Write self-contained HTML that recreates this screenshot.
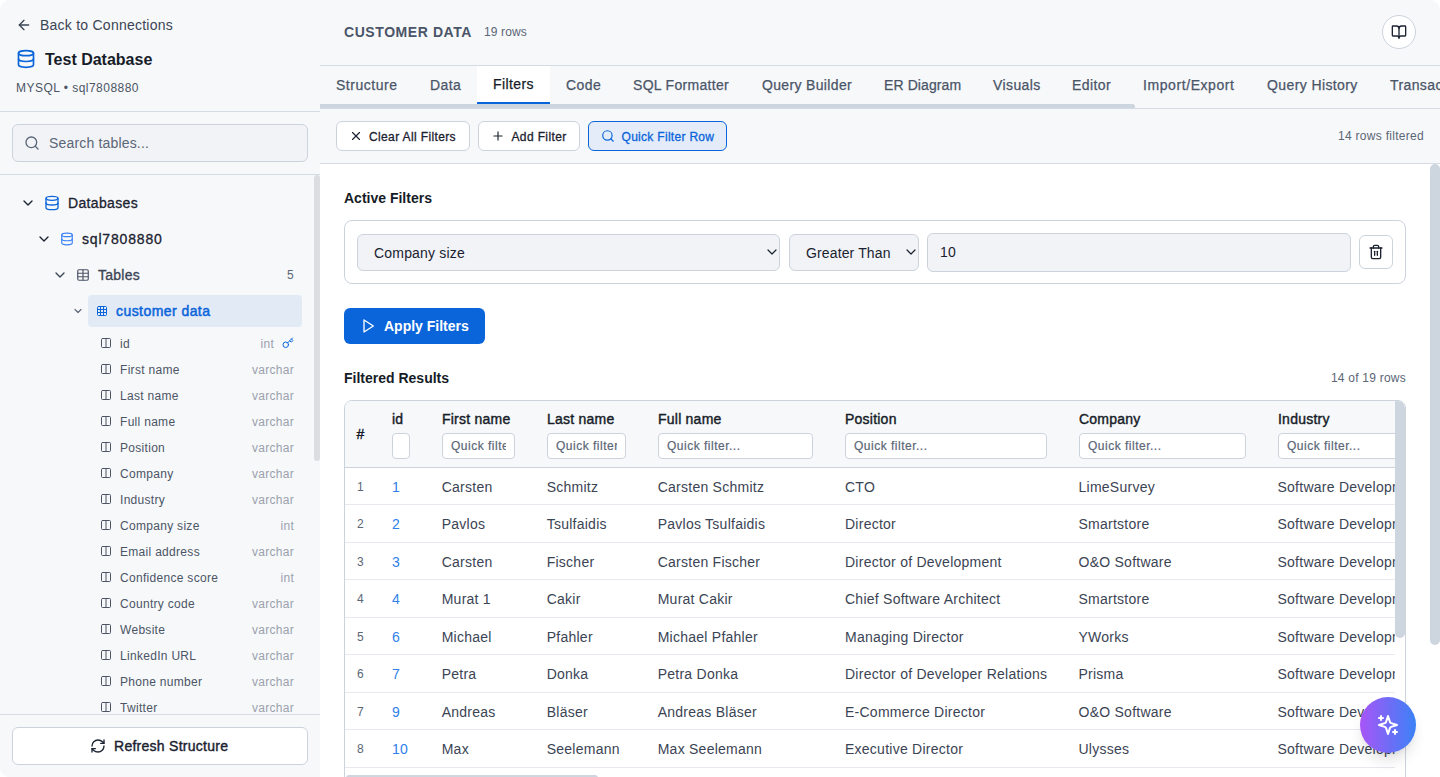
<!DOCTYPE html>
<html lang="en">
<head>
<meta charset="utf-8">
<title>Test Database - Filters</title>
<style>
*{box-sizing:border-box;margin:0;padding:0}
html,body{width:1440px;height:777px;overflow:hidden;background:#fff}
body{font-family:"Liberation Sans",sans-serif;color:#1b2230;font-size:14px;position:relative}
.app{position:absolute;left:0;top:0;width:1440px;height:777px;background:#f7f8fa;border-radius:10px;overflow:hidden}
.abs{position:absolute}
.t{position:absolute;white-space:nowrap;line-height:20px}
.med{-webkit-text-stroke:0.3px currentColor}
svg{position:absolute;overflow:visible}
.ic{fill:none;stroke:currentColor;stroke-width:2;stroke-linecap:round;stroke-linejoin:round}
/* sidebar */
.side{position:absolute;left:0;top:0;width:320px;height:777px;background:#f7f8fa}
.hl{position:absolute;height:1px;background:#d5dbe4}
.search{position:absolute;left:12px;top:124px;width:296px;height:38px;border:1px solid #ccd3dd;border-radius:6px;background:#f1f3f7}
.col{position:absolute;left:0;width:320px;height:26px}
.col .n{position:absolute;left:120px;top:4px;font-size:12px;line-height:20px;color:#4b5565;letter-spacing:.3px;white-space:nowrap}
.col .ty{position:absolute;right:26px;top:4px;font-size:12px;line-height:20px;color:#9aa1ad;letter-spacing:.28px;white-space:nowrap}
.col svg{left:100px;top:7px;width:12px;height:12px;color:#4b5565}
.col svg.key{left:282px;top:7px;width:12px;height:12px;color:#0b65da}
.btn{position:absolute;background:#fff;border:1px solid #ccd3dd;border-radius:6px}
/* main */
.main{position:absolute;left:320px;top:0;width:1120px;height:777px}
.tab{position:absolute;top:75px;font-size:14px;line-height:20px;color:#4a5568;white-space:nowrap;-webkit-text-stroke:0.25px currentColor}
.content{position:absolute;left:0;top:164px;width:1120px;height:613px;background:#fff}
.sel{position:absolute;top:234px;height:37px;border:1px solid #ccd3dd;border-radius:6px;background:#f1f3f7}
.tbl{position:absolute;left:24px;top:400px;width:1062px;height:400px;border:1px solid #ccd3dd;border-radius:8px;background:#fff;overflow:hidden}
.thead{position:absolute;left:0;top:0;width:1062px;height:67px;background:#f7f8fa;border-bottom:1px solid #ccd3dd}
.th{position:absolute;top:8px;font-size:14px;line-height:20px;color:#161c28;white-space:nowrap;letter-spacing:.23px;-webkit-text-stroke:.4px currentColor}
.qf{position:absolute;top:32px;height:26px;border:1px solid #ccd3dd;border-radius:4px;background:#fff;padding:0 8px}
.qf div{font-size:12px;line-height:25px;color:#5b6676;overflow:hidden;white-space:nowrap;letter-spacing:.5px;-webkit-text-stroke:0.2px currentColor}
.row{position:absolute;left:0;width:1062px;border-bottom:1px solid #e6e9ee}
.row span{position:absolute;top:var(--t);line-height:20px;font-size:14px;color:#3b4454;white-space:nowrap;letter-spacing:.25px}
.row .rn{left:12px;font-size:12px;color:#5b6676;letter-spacing:0}
.row .id{left:47px;color:#2f80e8}
.c1{left:96.7px}.c2{left:201.7px}.c3{left:312.7px}.c4{left:500px}.c5{left:733.5px}.c6{left:932.5px}
</style>
</head>
<body>
<div class="app">
<!-- SIDEBAR -->
<div class="side">
  <svg class="ic" viewBox="0 0 24 24" style="left:16px;top:17px;width:16px;height:16px;color:#3b4454"><path d="m12 19-7-7 7-7"/><path d="M19 12H5"/></svg>
  <div class="t" style="left:40px;top:15px;font-size:14px;color:#3b4454;letter-spacing:.24px">Back to Connections</div>
  <svg class="ic" viewBox="0 0 24 24" style="left:16px;top:49px;width:20px;height:20px;color:#0b65da"><ellipse cx="12" cy="5" rx="9" ry="3"/><path d="M3 5V19A9 3 0 0 0 21 19V5"/><path d="M3 12A9 3 0 0 0 21 12"/></svg>
  <div class="t" style="left:45px;top:50px;font-size:16px;font-weight:700;color:#161c28">Test Database</div>
  <div class="t" style="left:16px;top:78px;font-size:12px;color:#4b5565;letter-spacing:.47px">MYSQL • sql7808880</div>
  <div class="hl" style="left:0;top:111px;width:320px"></div>
  <div class="search">
    <svg class="ic" viewBox="0 0 24 24" style="left:11px;top:10px;width:16px;height:16px;color:#5b6676"><circle cx="11" cy="11" r="8"/><path d="m21 21-4.3-4.3"/></svg>
    <div class="t" style="left:36px;top:8px;font-size:14px;color:#5b6676;letter-spacing:.17px">Search tables...</div>
  </div>
  <div class="hl" style="left:0;top:174px;width:320px"></div>
  <div class="abs" style="left:314px;top:175px;width:5.5px;height:286px;border-radius:3px;background:#dcdde0"></div>

  <!-- tree -->
  <svg class="ic" viewBox="0 0 24 24" style="left:20px;top:195px;width:16px;height:16px;color:#1b2230"><path d="m6 9 6 6 6-6"/></svg>
  <svg class="ic" viewBox="0 0 24 24" style="left:44px;top:195px;width:16px;height:16px;color:#0b65da"><ellipse cx="12" cy="5" rx="9" ry="3"/><path d="M3 5V19A9 3 0 0 0 21 19V5"/><path d="M3 12A9 3 0 0 0 21 12"/></svg>
  <div class="t med" style="left:68px;top:193px;font-size:14px;color:#1b2230;letter-spacing:.34px">Databases</div>

  <svg class="ic" viewBox="0 0 24 24" style="left:36px;top:231px;width:16px;height:16px;color:#1b2230"><path d="m6 9 6 6 6-6"/></svg>
  <svg class="ic" viewBox="0 0 24 24" style="left:60px;top:232px;width:14px;height:14px;color:#3b82f6"><ellipse cx="12" cy="5" rx="9" ry="3"/><path d="M3 5V19A9 3 0 0 0 21 19V5"/><path d="M3 12A9 3 0 0 0 21 12"/></svg>
  <div class="t med" style="left:82px;top:229px;font-size:14px;color:#1b2230;letter-spacing:.82px">sql7808880</div>

  <svg class="ic" viewBox="0 0 24 24" style="left:52px;top:267px;width:16px;height:16px;color:#3b4454"><path d="m6 9 6 6 6-6"/></svg>
  <svg class="ic" viewBox="0 0 24 24" style="left:76px;top:268px;width:14px;height:14px;color:#4b5565"><rect x="3" y="3" width="18" height="18" rx="2"/><path d="M12 3v18M3 9h18M3 15h18"/></svg>
  <div class="t med" style="left:98px;top:265px;font-size:14px;color:#3b4454;letter-spacing:.26px">Tables</div>
  <div class="t" style="left:287px;top:265px;font-size:12px;color:#5b6676">5</div>

  <div class="abs" style="left:88px;top:295px;width:214px;height:32px;border-radius:4px;background:#e2eaf6"></div>
  <svg class="ic" viewBox="0 0 24 24" style="left:72px;top:305px;width:12px;height:12px;color:#5f6a7a;stroke-width:2.4"><path d="m6 9 6 6 6-6"/></svg>
  <svg class="ic" viewBox="0 0 24 24" style="left:96px;top:305px;width:12px;height:12px;color:#0b65da"><rect x="3" y="3" width="18" height="18" rx="2"/><path d="M3 9h18M3 15h18M9 3v18M15 3v18"/></svg>
  <div class="t" style="left:116px;top:301px;font-size:14px;color:#0b65da;letter-spacing:.44px;-webkit-text-stroke:.5px currentColor">customer data</div>

    <div class="col" style="top:330px"><svg class="ic" viewBox="0 0 24 24"><rect x="3" y="3" width="18" height="18" rx="2"/><path d="M12 3v18"/></svg><span class="n">id</span><span class="ty" style="right:46px">int</span><svg class="ic key" viewBox="0 0 24 24"><path d="m15.5 7.5 2.3 2.3a1 1 0 0 0 1.4 0l2.1-2.1a1 1 0 0 0 0-1.4L19 4"/><path d="m21 2-9.6 9.6"/><circle cx="7.5" cy="15.5" r="5.5"/></svg></div>
  <div class="col" style="top:356px"><svg class="ic" viewBox="0 0 24 24"><rect x="3" y="3" width="18" height="18" rx="2"/><path d="M12 3v18"/></svg><span class="n">First name</span><span class="ty" style="right:26px">varchar</span></div>
  <div class="col" style="top:382px"><svg class="ic" viewBox="0 0 24 24"><rect x="3" y="3" width="18" height="18" rx="2"/><path d="M12 3v18"/></svg><span class="n">Last name</span><span class="ty" style="right:26px">varchar</span></div>
  <div class="col" style="top:408px"><svg class="ic" viewBox="0 0 24 24"><rect x="3" y="3" width="18" height="18" rx="2"/><path d="M12 3v18"/></svg><span class="n">Full name</span><span class="ty" style="right:26px">varchar</span></div>
  <div class="col" style="top:434px"><svg class="ic" viewBox="0 0 24 24"><rect x="3" y="3" width="18" height="18" rx="2"/><path d="M12 3v18"/></svg><span class="n">Position</span><span class="ty" style="right:26px">varchar</span></div>
  <div class="col" style="top:460px"><svg class="ic" viewBox="0 0 24 24"><rect x="3" y="3" width="18" height="18" rx="2"/><path d="M12 3v18"/></svg><span class="n">Company</span><span class="ty" style="right:26px">varchar</span></div>
  <div class="col" style="top:486px"><svg class="ic" viewBox="0 0 24 24"><rect x="3" y="3" width="18" height="18" rx="2"/><path d="M12 3v18"/></svg><span class="n">Industry</span><span class="ty" style="right:26px">varchar</span></div>
  <div class="col" style="top:512px"><svg class="ic" viewBox="0 0 24 24"><rect x="3" y="3" width="18" height="18" rx="2"/><path d="M12 3v18"/></svg><span class="n">Company size</span><span class="ty" style="right:26px">int</span></div>
  <div class="col" style="top:538px"><svg class="ic" viewBox="0 0 24 24"><rect x="3" y="3" width="18" height="18" rx="2"/><path d="M12 3v18"/></svg><span class="n">Email address</span><span class="ty" style="right:26px">varchar</span></div>
  <div class="col" style="top:564px"><svg class="ic" viewBox="0 0 24 24"><rect x="3" y="3" width="18" height="18" rx="2"/><path d="M12 3v18"/></svg><span class="n">Confidence score</span><span class="ty" style="right:26px">int</span></div>
  <div class="col" style="top:590px"><svg class="ic" viewBox="0 0 24 24"><rect x="3" y="3" width="18" height="18" rx="2"/><path d="M12 3v18"/></svg><span class="n">Country code</span><span class="ty" style="right:26px">varchar</span></div>
  <div class="col" style="top:616px"><svg class="ic" viewBox="0 0 24 24"><rect x="3" y="3" width="18" height="18" rx="2"/><path d="M12 3v18"/></svg><span class="n">Website</span><span class="ty" style="right:26px">varchar</span></div>
  <div class="col" style="top:642px"><svg class="ic" viewBox="0 0 24 24"><rect x="3" y="3" width="18" height="18" rx="2"/><path d="M12 3v18"/></svg><span class="n">LinkedIn URL</span><span class="ty" style="right:26px">varchar</span></div>
  <div class="col" style="top:668px"><svg class="ic" viewBox="0 0 24 24"><rect x="3" y="3" width="18" height="18" rx="2"/><path d="M12 3v18"/></svg><span class="n">Phone number</span><span class="ty" style="right:26px">varchar</span></div>
  <div class="col" style="top:694px"><svg class="ic" viewBox="0 0 24 24"><rect x="3" y="3" width="18" height="18" rx="2"/><path d="M12 3v18"/></svg><span class="n">Twitter</span><span class="ty" style="right:26px">varchar</span></div>

  <div class="hl" style="left:0;top:714px;width:320px"></div>
  <div class="abs" style="left:0;top:715px;width:320px;height:62px;background:#f7f8fa"></div>
  <div class="btn" style="left:12px;top:727px;width:296px;height:38px">
    <svg class="ic" viewBox="0 0 24 24" style="left:77px;top:10px;width:16px;height:16px;color:#1b2230"><path d="M3 12a9 9 0 0 1 9-9 9.75 9.75 0 0 1 6.74 2.74L21 8"/><path d="M21 3v5h-5"/><path d="M21 12a9 9 0 0 1-9 9 9.75 9.75 0 0 1-6.74-2.74L3 16"/><path d="M8 16H3v5"/></svg>
    <div class="t" style="left:101px;top:8px;font-size:14px;color:#1b2230;letter-spacing:.27px;-webkit-text-stroke:.4px currentColor">Refresh Structure</div>
  </div>
</div>

<!-- MAIN -->
<div class="main" id="main">
  <!-- header -->
  <div class="t" style="left:24px;top:22px;font-size:14px;font-weight:700;color:#4a5568;letter-spacing:.57px">CUSTOMER DATA</div>
  <div class="t" style="left:164px;top:22px;font-size:12px;color:#5b6676;letter-spacing:.14px">19 rows</div>
  <div class="abs" style="left:1062px;top:15px;width:34px;height:34px;border-radius:17px;background:#fff;border:1px solid #ccd3dd"></div>
  <svg class="ic" viewBox="0 0 24 24" style="left:1071px;top:24px;width:16px;height:16px;color:#1b2230"><path d="M12 7v14"/><path d="M3 18a1 1 0 0 1-1-1V4a1 1 0 0 1 1-1h5a4 4 0 0 1 4 4 4 4 0 0 1 4-4h5a1 1 0 0 1 1 1v13a1 1 0 0 1-1 1h-6a3 3 0 0 0-3 3 3 3 0 0 0-3-3z"/></svg>
  <div class="hl" style="left:0;top:65px;width:1120px"></div>
  <!-- tabs -->
  <div class="abs" style="left:157px;top:66px;width:73px;height:38px;background:#fff;border-bottom:2px solid #0b65da"></div>
  <div class="tab" style="left:16px;letter-spacing:.52px">Structure</div>
  <div class="tab" style="left:110px;letter-spacing:.4px">Data</div>
  <div class="tab" style="left:173px;top:74px;color:#161c28;letter-spacing:.4px">Filters</div>
  <div class="tab" style="left:246px;letter-spacing:.4px">Code</div>
  <div class="tab" style="left:313px;letter-spacing:.3px">SQL Formatter</div>
  <div class="tab" style="left:442px;letter-spacing:.34px">Query Builder</div>
  <div class="tab" style="left:564px;letter-spacing:.1px">ER Diagram</div>
  <div class="tab" style="left:673px;letter-spacing:.4px">Visuals</div>
  <div class="tab" style="left:752px;letter-spacing:.4px">Editor</div>
  <div class="tab" style="left:823px;letter-spacing:.58px">Import/Export</div>
  <div class="tab" style="left:947px;letter-spacing:.4px">Query History</div>
  <div class="tab" style="left:1070px;letter-spacing:.4px">Transactions</div>
  <div class="abs" style="left:0;top:104px;width:815px;height:4.5px;background:#cdd5df;border-radius:0 3px 3px 0"></div>
  <div class="hl" style="left:0;top:108px;width:1120px"></div>
  <!-- toolbar -->
  <div class="btn" style="left:16px;top:121px;width:134px;height:30px">
    <svg class="ic" viewBox="0 0 24 24" style="left:12px;top:7px;width:14px;height:14px;color:#1b2230;stroke-width:2"><path d="M18 6 6 18"/><path d="m6 6 12 12"/></svg>
    <div class="t med" style="left:32px;top:4.5px;font-size:12px;color:#1b2230;letter-spacing:.37px">Clear All Filters</div>
  </div>
  <div class="btn" style="left:157.5px;top:121px;width:102px;height:30px">
    <svg class="ic" viewBox="0 0 24 24" style="left:12px;top:7px;width:14px;height:14px;color:#1b2230"><path d="M5 12h14"/><path d="M12 5v14"/></svg>
    <div class="t med" style="left:33px;top:4.5px;font-size:12px;color:#1b2230;letter-spacing:.37px">Add Filter</div>
  </div>
  <div class="btn" style="left:267.5px;top:121px;width:139.5px;height:30px;background:#e4ecf9;border-color:#0b65da">
    <svg class="ic" viewBox="0 0 24 24" style="left:12px;top:7px;width:14px;height:14px;color:#0b65da"><circle cx="11" cy="11" r="8"/><path d="m21 21-4.3-4.3"/></svg>
    <div class="t med" style="left:33px;top:4.5px;font-size:12px;color:#0b65da;letter-spacing:.3px">Quick Filter Row</div>
  </div>
  <div class="t" style="right:16px;top:126px;font-size:12px;color:#5b6676;letter-spacing:.29px">14 rows filtered</div>
  <div class="hl" style="left:0;top:163px;width:1120px"></div>

  <!-- content -->
  <div class="content"></div>
  <div class="abs" style="left:1110px;top:164px;width:10px;height:481px;background:#cdd5df;border-radius:5px"></div>
  <div class="t" style="left:24px;top:188px;font-size:14px;font-weight:700;color:#161c28">Active Filters</div>
  <div class="abs" style="left:24px;top:220px;width:1062px;height:64px;border:1px solid #ccd3dd;border-radius:8px;background:#fff"></div>
  <div class="sel" style="left:37px;width:423px">
    <div class="t" style="left:16px;top:7.5px;font-size:14px;color:#1b2230;letter-spacing:.19px">Company size</div>
    <svg class="ic" viewBox="0 0 24 24" style="right:-1px;top:9px;width:16px;height:16px;color:#1b2230;stroke-width:1.8"><path d="m6 9 6 6 6-6"/></svg>
  </div>
  <div class="sel" style="left:469px;width:130px">
    <div class="t" style="left:16px;top:7.5px;font-size:14px;color:#1b2230;letter-spacing:.13px">Greater Than</div>
    <svg class="ic" viewBox="0 0 24 24" style="right:-1px;top:9px;width:16px;height:16px;color:#1b2230;stroke-width:1.8"><path d="m6 9 6 6 6-6"/></svg>
  </div>
  <div class="sel" style="left:607px;width:424px;top:233px;height:39px">
    <div class="t" style="left:12px;top:8px;font-size:14px;color:#1b2230;letter-spacing:.3px">10</div>
  </div>
  <div class="btn" style="left:1039px;top:235px;width:34px;height:34px">
    <svg class="ic" viewBox="0 0 24 24" style="left:8px;top:8px;width:16px;height:16px;color:#1b2230"><path d="M3 6h18"/><path d="M19 6v14c0 1-1 2-2 2H7c-1 0-2-1-2-2V6"/><path d="M8 6V4c0-1 1-2 2-2h4c1 0 2 1 2 2v2"/><path d="M10 11v6"/><path d="M14 11v6"/></svg>
  </div>
  <div class="abs" style="left:24px;top:308px;width:140.5px;height:36px;border-radius:6px;background:#0b65da"></div>
  <svg class="ic" viewBox="0 0 24 24" style="left:40px;top:318px;width:16px;height:16px;color:#fff"><polygon points="6 3 20 12 6 21 6 3"/></svg>
  <div class="t" style="left:64px;top:316px;font-size:14px;font-weight:700;color:#fff">Apply Filters</div>
  <div class="t" style="left:24px;top:368px;font-size:14px;font-weight:700;color:#161c28">Filtered Results</div>
  <div class="t" style="right:34px;top:368px;font-size:12px;color:#5b6676;letter-spacing:.23px">14 of 19 rows</div>

  <div class="tbl">
    <div class="thead">
      <div class="th" style="left:11.5px;top:23px">#</div>
      <div class="th" style="left:47px">id</div>
      <div class="th" style="left:97px">First name</div>
      <div class="th" style="left:202px">Last name</div>
      <div class="th" style="left:313px">Full name</div>
      <div class="th" style="left:500px">Position</div>
      <div class="th" style="left:734px">Company</div>
      <div class="th" style="left:933px">Industry</div>
      <div class="qf" style="left:47px;width:18px"></div>
      <div class="qf" style="left:97px;width:73px"><div>Quick filter...</div></div>
      <div class="qf" style="left:202px;width:79px"><div>Quick filter...</div></div>
      <div class="qf" style="left:313px;width:155px"><div>Quick filter...</div></div>
      <div class="qf" style="left:500px;width:202px"><div>Quick filter...</div></div>
      <div class="qf" style="left:734px;width:167px"><div>Quick filter...</div></div>
      <div class="qf" style="left:933px;width:167px"><div>Quick filter...</div></div>
    </div>
    <div class="row" style="top:67px;height:37px;--t:8.5px"><span class="rn">1</span><span class="id">1</span><span class="c1">Carsten</span><span class="c2">Schmitz</span><span class="c3">Carsten Schmitz</span><span class="c4">CTO</span><span class="c5">LimeSurvey</span><span class="c6">Software Development</span></div>
    <div class="row" style="top:104px;height:38px;--t:9.0px"><span class="rn">2</span><span class="id">2</span><span class="c1">Pavlos</span><span class="c2">Tsulfaidis</span><span class="c3">Pavlos Tsulfaidis</span><span class="c4">Director</span><span class="c5">Smartstore</span><span class="c6">Software Development</span></div>
    <div class="row" style="top:142px;height:37px;--t:8.5px"><span class="rn">3</span><span class="id">3</span><span class="c1">Carsten</span><span class="c2">Fischer</span><span class="c3">Carsten Fischer</span><span class="c4">Director of Development</span><span class="c5">O&amp;O Software</span><span class="c6">Software Development</span></div>
    <div class="row" style="top:179px;height:38px;--t:9.0px"><span class="rn">4</span><span class="id">4</span><span class="c1">Murat 1</span><span class="c2">Cakir</span><span class="c3">Murat Cakir</span><span class="c4">Chief Software Architect</span><span class="c5">Smartstore</span><span class="c6">Software Development</span></div>
    <div class="row" style="top:217px;height:37px;--t:8.5px"><span class="rn">5</span><span class="id">6</span><span class="c1">Michael</span><span class="c2">Pfahler</span><span class="c3">Michael Pfahler</span><span class="c4">Managing Director</span><span class="c5">YWorks</span><span class="c6">Software Development</span></div>
    <div class="row" style="top:254px;height:38px;--t:9.0px"><span class="rn">6</span><span class="id">7</span><span class="c1">Petra</span><span class="c2">Donka</span><span class="c3">Petra Donka</span><span class="c4">Director of Developer Relations</span><span class="c5">Prisma</span><span class="c6">Software Development</span></div>
    <div class="row" style="top:292px;height:37px;--t:8.5px"><span class="rn">7</span><span class="id">9</span><span class="c1">Andreas</span><span class="c2">Bläser</span><span class="c3">Andreas Bläser</span><span class="c4">E-Commerce Director</span><span class="c5">O&amp;O Software</span><span class="c6">Software Development</span></div>
    <div class="row" style="top:329px;height:38px;--t:9.0px"><span class="rn">8</span><span class="id">10</span><span class="c1">Max</span><span class="c2">Seelemann</span><span class="c3">Max Seelemann</span><span class="c4">Executive Director</span><span class="c5">Ulysses</span><span class="c6">Software Development</span></div>
    <div class="row" style="top:367px;height:37px;--t:8.5px"><span class="rn">9</span><span class="id">11</span><span class="c1">Sam</span><span class="c2">Taylor</span><span class="c3">Sam Taylor</span><span class="c4">Head of Engineering</span><span class="c5">Acme</span><span class="c6">Software Development</span></div>
    <div class="abs" style="left:1050px;top:0;width:10px;height:436px;background:#fff"></div>
    <div class="abs" style="left:1050px;top:0;width:10px;height:237px;background:#cdd5df;border-radius:0 5px 5px 5px"></div>
    <div class="abs" style="left:1px;top:374px;width:252px;height:6px;background:#cdd5df;border-radius:3px"></div>
  </div>
  <!-- FAB -->
  <div class="abs" style="left:1040px;top:697px;width:56px;height:56px;border-radius:28px;background:linear-gradient(90deg,#a855f7,#3b82f6);box-shadow:0 10px 15px -3px rgba(0,0,0,.12),0 4px 6px -4px rgba(0,0,0,.1)"></div>
  <svg class="ic" viewBox="0 0 24 24" style="left:1056px;top:713px;width:24px;height:24px;color:#fff"><path d="m12 3-1.912 5.813a2 2 0 0 1-1.275 1.275L3 12l5.813 1.912a2 2 0 0 1 1.275 1.275L12 21l1.912-5.813a2 2 0 0 1 1.275-1.275L21 12l-5.813-1.912a2 2 0 0 1-1.275-1.275L12 3Z"/><path d="M5 3v4"/><path d="M19 17v4"/><path d="M3 5h4"/><path d="M17 19h4"/></svg>
</div>
</div>
</body>
</html>
